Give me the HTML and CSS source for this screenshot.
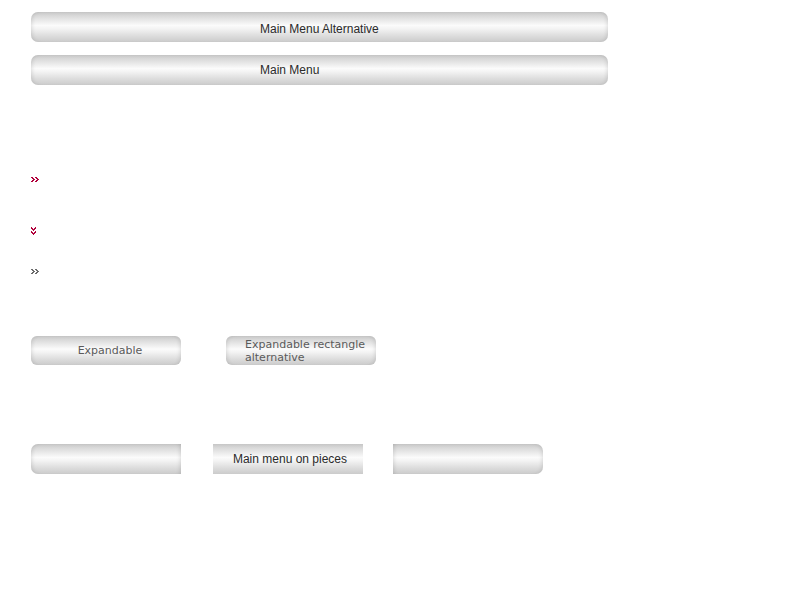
FILE: index.html
```html
<!DOCTYPE html>
<html>
<head>
<meta charset="utf-8">
<link rel="stylesheet" href="styles.css">
</head>
<body>
<div class="page">
  <div class="bar bar-first">Main Menu Alternative</div>
  <div class="bar bar-second">Main Menu</div>

  <div class="arrow arrow-one">
    <svg width="8" height="5" viewBox="0 0 8 5" shape-rendering="crispEdges"><path fill="#b1003b" d="M0 0h2v1H0zM1 1h2v1H1zM2 2h2v1H2zM1 3h2v1H1zM0 4h2v1H0zM4 0h2v1H4zM5 1h2v1H5zM6 2h2v1H6zM5 3h2v1H5zM4 4h2v1H4z"/></svg>
  </div>
  <div class="arrow arrow-two">
    <svg width="5" height="8" viewBox="0 0 5 8" shape-rendering="crispEdges"><path fill="#b1003b" d="M0 0h1v2H0zM1 1h1v2H1zM2 2h1v2H2zM3 1h1v2H3zM4 0h1v2H4zM0 4h1v2H0zM1 5h1v2H1zM2 6h1v2H2zM3 5h1v2H3zM4 4h1v2H4z"/></svg>
  </div>
  <div class="arrow arrow-three">
    <svg width="8" height="5" viewBox="0 0 8 5" shape-rendering="crispEdges"><path fill="#6a6a6a" d="M0 0h2v1H0zM1 1h2v1H1zM2 2h2v1H2zM1 3h2v1H1zM0 4h2v1H0zM4 0h2v1H4zM5 1h2v1H5zM6 2h2v1H6zM5 3h2v1H5zM4 4h2v1H4z"/></svg>
  </div>

  <div class="exp-row">
    <div class="exp exp-center">Expandable</div>
    <div class="exp exp-left">Expandable rectangle<br>alternative</div>
  </div>

  <div class="pieces">
    <div class="piece piece-left"></div>
    <div class="piece piece-mid">Main menu on pieces</div>
    <div class="piece piece-right"></div>
  </div>
</div>
</body>
</html>
```

FILE: styles.css
```css
html, body {
  margin: 0;
  padding: 0;
  background: #ffffff;
}

.page {
  padding: 12px 0 0 31px;
  display: flex;
  flex-direction: column;
  align-items: flex-start;
}

.bar,
.exp,
.piece {
  background: linear-gradient(to bottom,
    #c6c6c6 0%,
    #d8d8d8 12%,
    #ebebeb 30%,
    #fbfbfb 45%,
    #f4f4f4 55%,
    #dedede 78%,
    #cbcbcb 100%);
  box-shadow: inset 4px 0 4px -3px rgba(0,0,0,0.12), inset -4px 0 4px -3px rgba(0,0,0,0.12);
}

.bar {
  width: 348px;
  height: 30px;
  padding-left: 229px;
  border-radius: 7px;
  display: flex;
  align-items: center;
  font-family: "Liberation Sans", Arial, sans-serif;
  font-size: 12px;
  color: #2a2a2a;
}

.bar-first {
  height: 27px;
  padding-top: 3px;
}

.bar-second {
  margin-top: 13px;
}

.arrow {
  display: flex;
  line-height: 0;
}

.arrow-one {
  margin-top: 92px;
}

.arrow-two {
  margin-top: 45px;
}

.arrow-three {
  margin-top: 34px;
}

.exp-row {
  margin-top: 62px;
  display: flex;
  gap: 45px;
}

.exp {
  height: 29px;
  border-radius: 6px;
  font-family: "DejaVu Sans", Verdana, sans-serif;
  font-size: 11px;
  color: #5a5a5a;
  display: flex;
  align-items: center;
}

.exp-center {
  width: 142px;
  padding-left: 8px;
  justify-content: center;
}

.exp-left {
  padding-left: 19px;
  width: 131px;
  line-height: 13px;
}

.pieces {
  margin-top: 79px;
  display: flex;
  gap: 32px;
}

.piece {
  width: 150px;
  height: 30px;
  display: flex;
  align-items: center;
  justify-content: center;
  font-family: "Liberation Sans", Arial, sans-serif;
  font-size: 12px;
  color: #2a2a2a;
}

.piece-left {
  border-radius: 7px 0 0 7px;
}

.piece-mid {
  width: 146px;
  padding-left: 4px;
  box-shadow: none;
}

.piece-right {
  margin-left: -2px;
  border-radius: 0 7px 7px 0;
}
```
